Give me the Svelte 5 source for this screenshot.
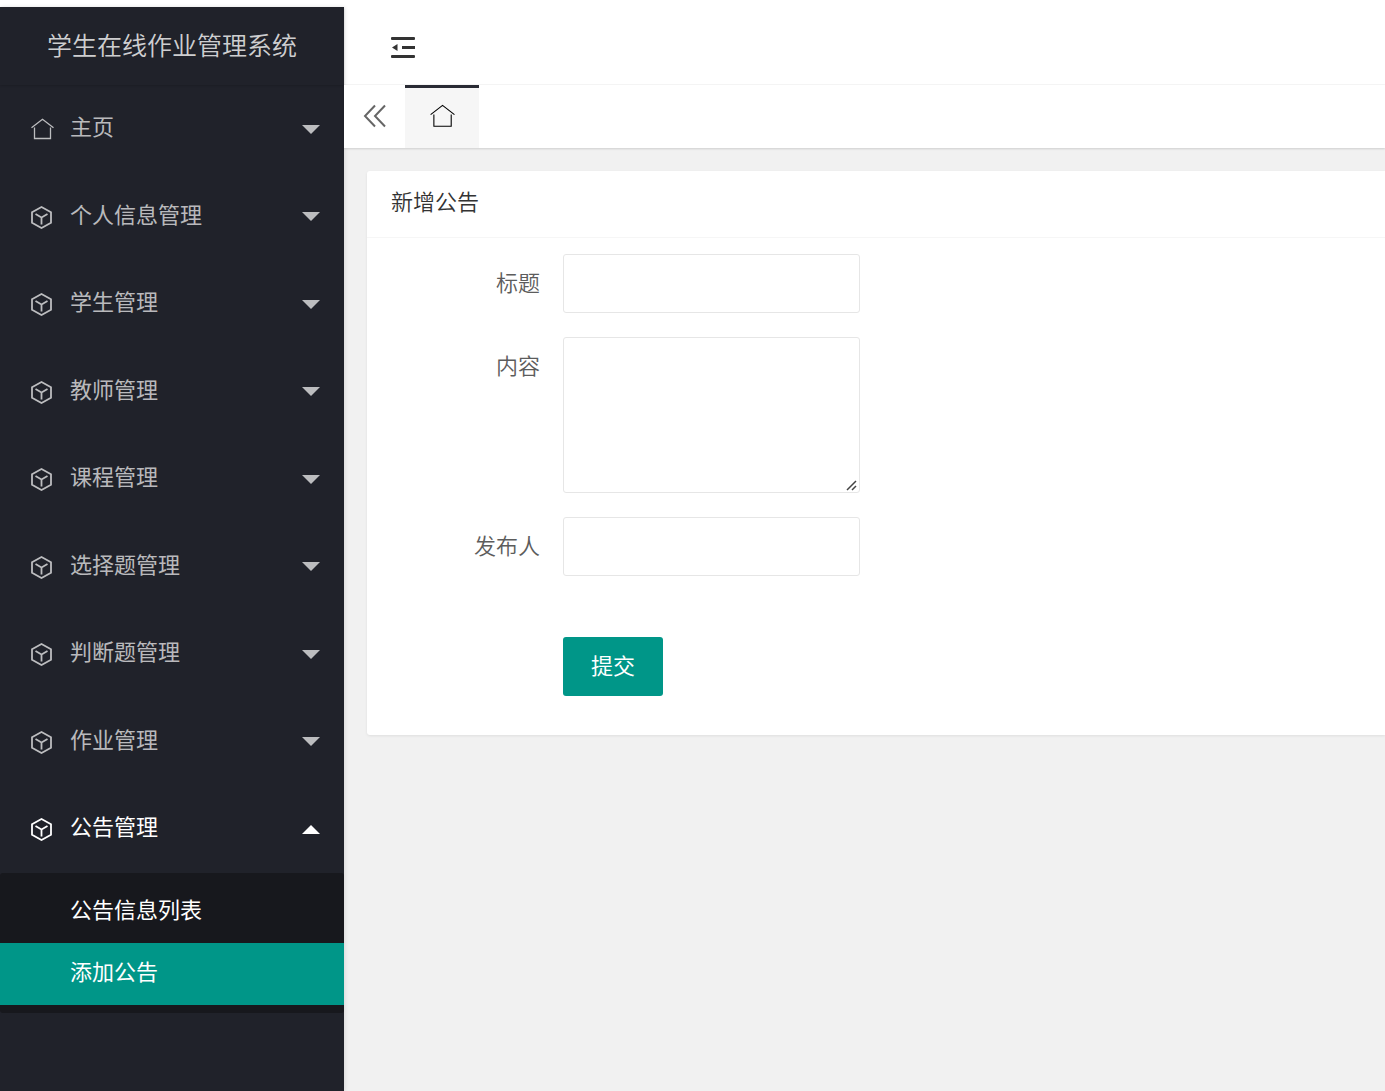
<script>
  const menu = [
    { label: '主页', icon: 'home' },
    { label: '个人信息管理', icon: 'cube' },
    { label: '学生管理', icon: 'cube' },
    { label: '教师管理', icon: 'cube' },
    { label: '课程管理', icon: 'cube' },
    { label: '选择题管理', icon: 'cube' },
    { label: '判断题管理', icon: 'cube' },
    { label: '作业管理', icon: 'cube' },
    { label: '公告管理', icon: 'cube' }
  ];
  const children = ['公告信息列表', '添加公告'];

  let opened = $state('公告管理');
  let current = $state('添加公告');
  let title = $state('');
  let content = $state('');
  let publisher = $state('');

  function toggle(label) {
    opened = opened === label ? '' : label;
  }
</script>

{#snippet house()}
  <svg class="icon" viewBox="0 0 24 24" fill="none" stroke="currentColor" aria-hidden="true">
    <path d="M1.500 10.700 12.500 2.200l11 8.500M4.500 10.500v11h16v-11" />
  </svg>
{/snippet}

{#snippet cube()}
  <svg class="icon bold" viewBox="0 0 24 24" fill="none" stroke="currentColor" aria-hidden="true">
    <path d="M11.500 2 21 7.200v10.600L11.500 23 2 17.800V7.200zM5.500 8.900l6 3.600 6-3.600M11.500 12.500v7" />
  </svg>
{/snippet}

<div class="layout">
  <aside class="side">
    <div class="logo">学生在线作业管理系统</div>
    <nav>
      <ul class="menu">
        {#each menu as item}
          <li>
            <button
              type="button"
              class="item"
              class:open={opened === item.label}
              aria-expanded={opened === item.label}
              onclick={() => toggle(item.label)}
            >
              {#if item.icon === 'home'}{@render house()}{:else}{@render cube()}{/if}
              <span class="name">{item.label}</span>
              <svg class="caret" viewBox="0 0 18 9" aria-hidden="true"><path d="M0 0h18l-9 9z" /></svg>
            </button>
            {#if item.label === '公告管理' && opened === item.label}
              <ul class="sub">
                {#each children as child}
                  <li>
                    <a href="#notice" class:active={current === child} onclick={() => (current = child)}>{child}</a>
                  </li>
                {/each}
              </ul>
            {/if}
          </li>
        {/each}
      </ul>
    </nav>
  </aside>

  <div class="main">
    <header class="header">
      <button type="button" class="fold" aria-label="侧边伸缩">
        <svg width="24" height="22" viewBox="0 0 24 22" fill="currentColor" aria-hidden="true">
          <path d="M1 0h22q1 0 1 1v1q0 1-1 1H1q-1 0-1-1V1q0-1 1-1zM11 9h13v3H11zM6.500 7v7L1 10.500zM1 18h22q1 0 1 1v1q0 1-1 1H1q-1 0-1-1v-1q0-1 1-1z" />
        </svg>
      </button>
    </header>
    <div class="tabs">
      <button type="button" class="prev" aria-label="向左滚动">
        <svg width="24" height="24" viewBox="0 0 24 24" fill="none" stroke="currentColor" stroke-width="2" aria-hidden="true">
          <path d="M12 1.500 2 12l10 10.500M22 1.500 12 12l10 10.500" />
        </svg>
      </button>
      <button type="button" class="tab" aria-label="主页">{@render house()}</button>
    </div>

    <main class="body">
      <section class="card">
        <h1>新增公告</h1>
        <form onsubmit={(e) => e.preventDefault()}>
          <div class="row">
            <label for="title">标题</label>
            <input id="title" type="text" bind:value={title} />
          </div>
          <div class="row">
            <label for="content">内容</label>
            <textarea id="content" bind:value={content}></textarea>
          </div>
          <div class="row">
            <label for="publisher">发布人</label>
            <input id="publisher" type="text" bind:value={publisher} />
          </div>
          <div class="actions">
            <button type="submit">提交</button>
          </div>
        </form>
      </section>
    </main>
  </div>
</div>

<style>
  :global(body) {
    margin: 0;
    background: #fff;
  }

  .layout {
    box-sizing: border-box;
    display: flex;
    min-height: 100vh;
    padding-top: 7px;
    font-family: 'Liberation Sans', 'Noto Sans CJK SC', sans-serif;
    font-size: 22px;
    font-weight: 350;
    line-height: 32px;
    color: #333;
  }

  button,
  input,
  textarea {
    box-sizing: border-box;
    margin: 0;
    padding: 0;
    border: 0;
    background: none;
    font: inherit;
    color: inherit;
  }

  button {
    cursor: pointer;
  }

  ul {
    margin: 0;
    padding: 0;
    list-style: none;
  }

  .icon {
    flex: none;
    width: 24px;
    height: 24px;
    stroke-width: 1.3;
  }

  .icon.bold {
    stroke-width: 1.8;
  }

  .side {
    position: relative;
    flex: none;
    width: 344px;
    background: #20222a;
    color: rgba(255, 255, 255, 0.7);
    box-shadow: 1px 0 4px rgba(0, 0, 0, 0.1);
  }

  .logo {
    height: 78px;
    line-height: 78px;
    font-size: 25px;
    text-align: center;
    color: rgba(255, 255, 255, 0.8);
    box-shadow: 0 1px 2px rgba(0, 0, 0, 0.15);
  }

  .item {
    display: flex;
    align-items: center;
    width: 100%;
    height: 88px;
    padding: 0 24px 0 30px;
    font-weight: 400;
    text-align: left;
  }

  li:nth-child(even) > .item {
    height: 87px;
  }

  .item.open {
    color: #fff;
  }

  .name {
    flex: 1;
    margin-left: 16px;
    padding-bottom: 2px;
  }

  .caret {
    width: 18px;
    height: 9px;
    fill: currentColor;
  }

  .open .caret {
    transform: rotate(180deg);
  }

  .sub {
    padding: 8px 0;
    border-radius: 3px;
    background: #17181d;
  }

  .sub a {
    display: block;
    padding: 0 0 2px 70px;
    line-height: 60px;
    font-weight: 400;
    color: #fff;
    text-decoration: none;
  }

  .sub a.active {
    background: #009688;
  }

  .main {
    display: flex;
    flex: 1;
    flex-direction: column;
    min-width: 0;
  }

  .header {
    display: flex;
    align-items: center;
    box-sizing: border-box;
    height: 78px;
    padding: 4px 47px 0;
    border-bottom: 1px solid #f6f6f6;
    background: #fff;
  }

  .fold,
  .prev,
  .tab {
    display: flex;
    align-items: center;
    justify-content: center;
  }

  .tabs {
    z-index: 1;
    display: flex;
    height: 63px;
    background: #fff;
    box-shadow: 0 1px 2px rgba(0, 0, 0, 0.15);
  }

  .prev {
    width: 61px;
    padding-bottom: 2px;
    color: #666;
  }

  .tab {
    width: 74px;
    padding-bottom: 4px;
    border-top: 3px solid #292b34;
    background: #f6f6f6;
    color: #000;
  }

  .tab .icon {
    width: 26px;
    height: 26px;
    stroke-width: 1;
  }

  .body {
    flex: 1;
    padding: 23px 0 23px 23px;
    background: #f1f1f1;
  }

  .card {
    border-radius: 3px 0 0 3px;
    background: #fff;
    box-shadow: 0 1px 3px rgba(0, 0, 0, 0.08);
  }

  h1 {
    margin: 0;
    padding: 0 24px 2px;
    border-bottom: 1px solid #f6f6f6;
    line-height: 64px;
    font-size: 22px;
    font-weight: 350;
  }

  form {
    padding: 16px 23px 39px;
  }

  .row {
    display: flex;
    align-items: flex-start;
    gap: 23px;
    margin-bottom: 24px;
  }

  label {
    width: 150px;
    line-height: 59px;
    text-align: right;
    color: #5c5c5c;
  }

  input,
  textarea {
    width: 297px;
    border: 1px solid #e6e6e6;
    border-radius: 3px;
    background: #fff;
    padding: 0 15px;
  }

  input {
    height: 59px;
  }

  textarea {
    display: block;
    min-height: 156px;
    padding: 9px 15px;
    resize: vertical;
  }

  textarea::-webkit-resizer {
    background: url("data:image/svg+xml,%3Csvg xmlns='http://www.w3.org/2000/svg' width='15' height='15'%3E%3Cpath d='M3 13 12 4M8 13l4-4' fill='none' stroke='%23444' stroke-width='1.5'/%3E%3C/svg%3E") no-repeat right bottom;
  }

  .actions {
    padding: 37px 0 0 173px;
  }

  .actions button {
    display: block;
    width: 100px;
    border-radius: 3px;
    background: #009688;
    line-height: 59px;
    font-weight: 400;
    color: #fff;
  }
</style>
